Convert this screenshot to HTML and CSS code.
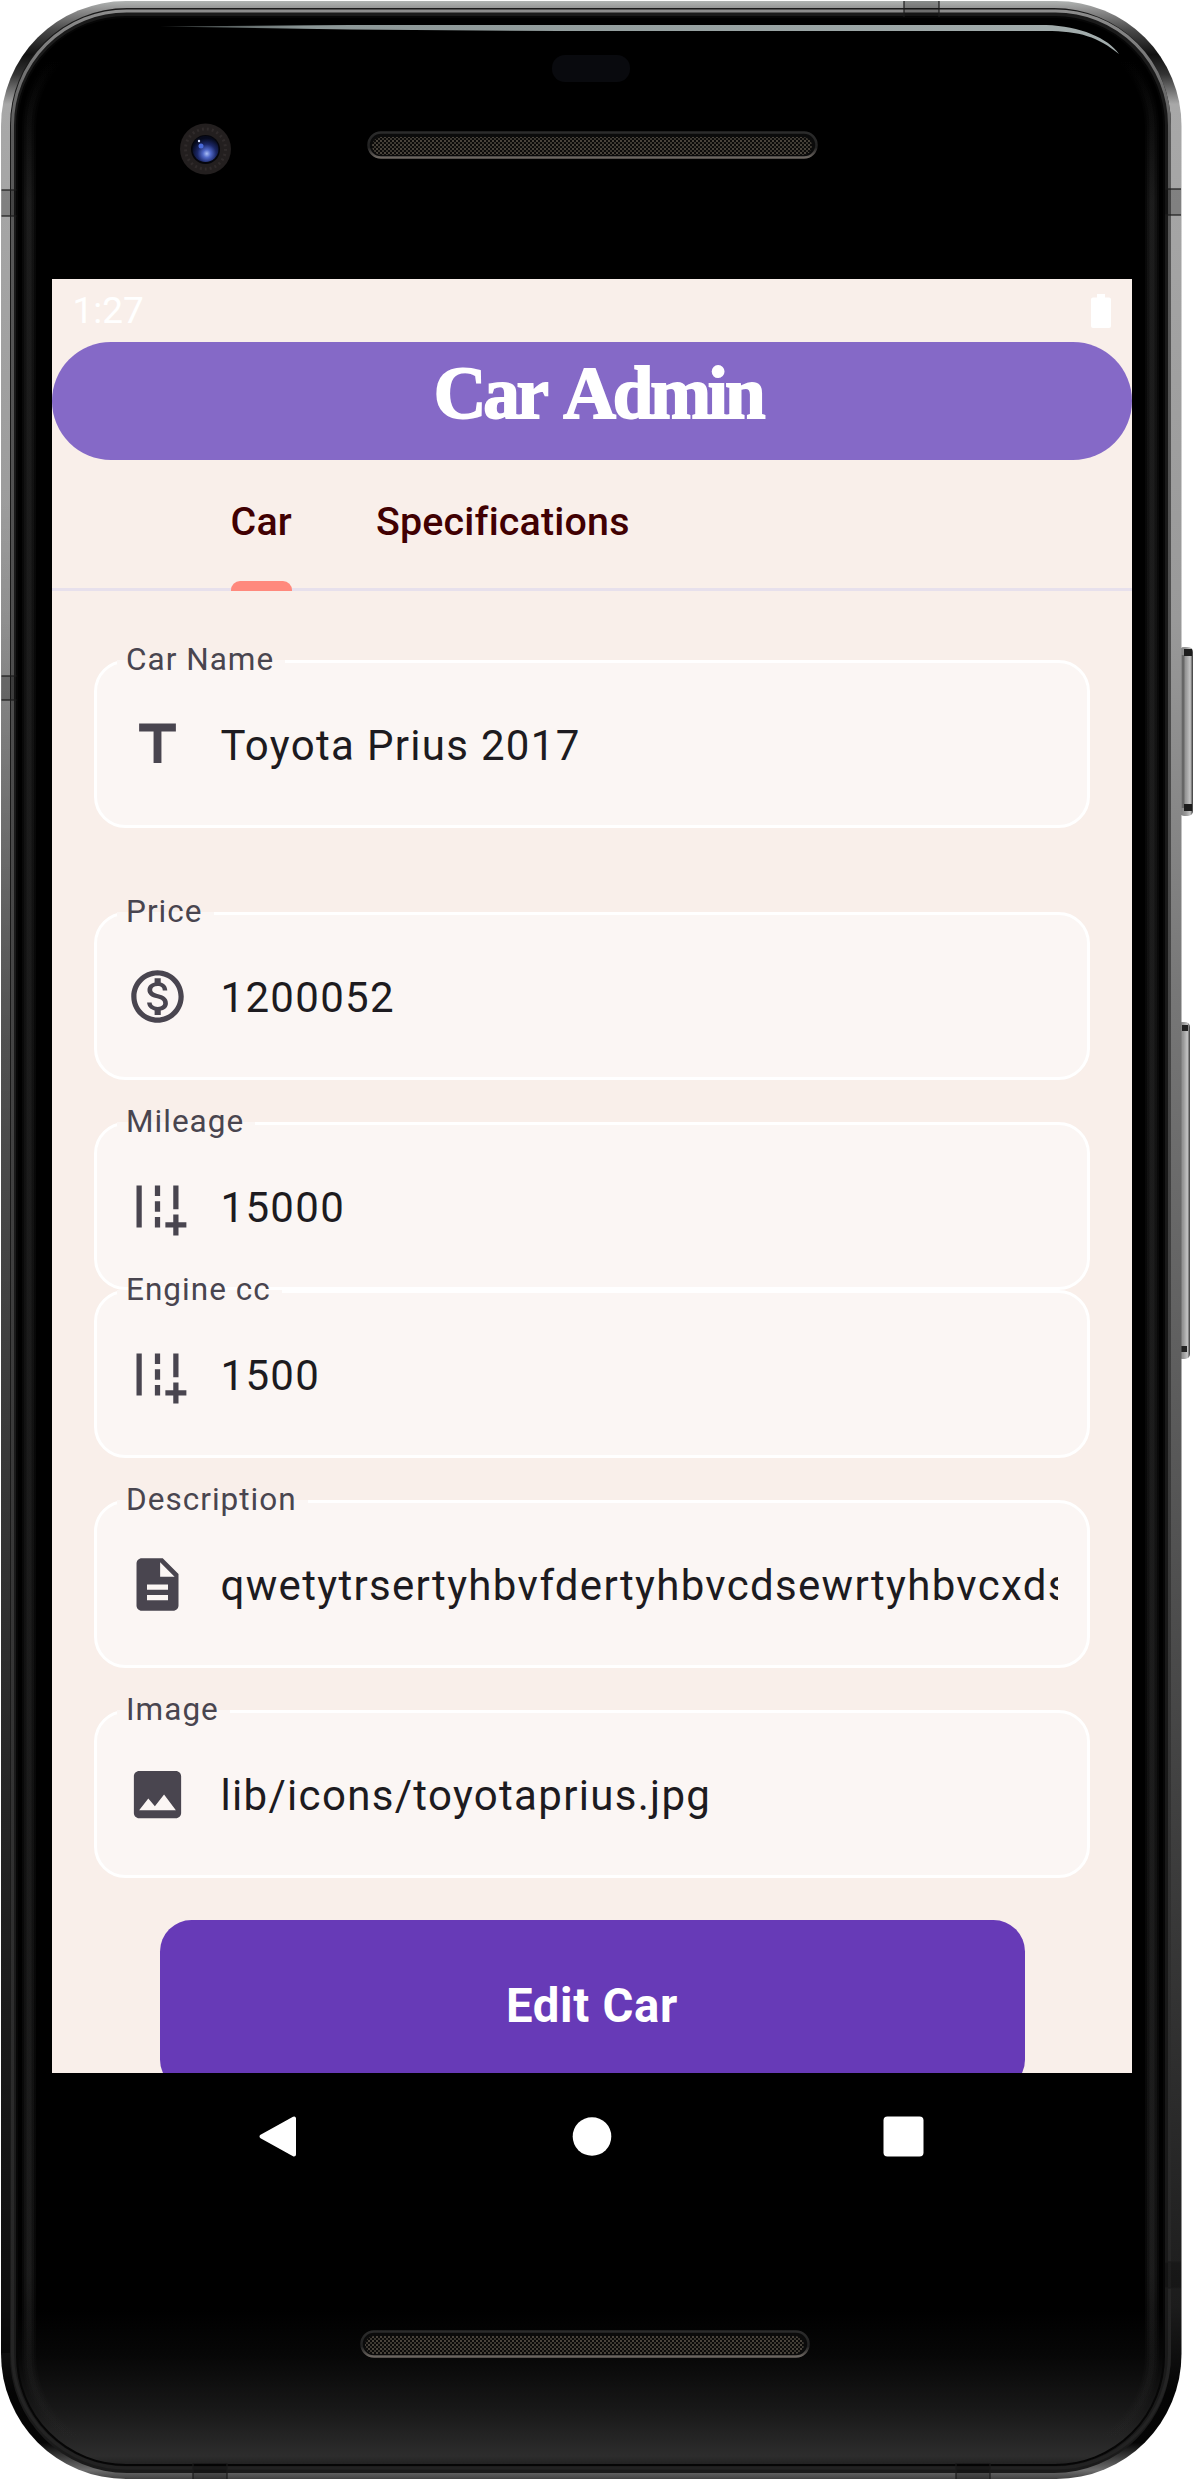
FILE: index.html
```html
<!DOCTYPE html>
<html lang="en">
<head>
<meta charset="utf-8">
<title>Car Admin</title>
<link rel="stylesheet" href="styles.css">
</head>
<body>
<div class="phone">
  <svg class="chassis" viewBox="0 0 1194 2480" aria-hidden="true">
    <defs>
      <linearGradient id="metal" gradientUnits="userSpaceOnUse" x1="0" y1="0" x2="0" y2="2480">
        <stop offset="0" stop-color="#b4b8b6"/><stop offset=".004" stop-color="#8f8f8f"/>
        <stop offset=".012" stop-color="#4a4a4a"/><stop offset=".022" stop-color="#101010"/><stop offset=".03" stop-color="#333"/>
        <stop offset=".042" stop-color="#a8a8a8"/><stop offset=".25" stop-color="#999"/>
        <stop offset=".4" stop-color="#777"/><stop offset=".6" stop-color="#565656"/>
        <stop offset=".8" stop-color="#343434"/><stop offset=".93" stop-color="#1c1c1c"/>
        <stop offset=".965" stop-color="#040404"/><stop offset=".985" stop-color="#050505"/>
        <stop offset=".996" stop-color="#6e6e6e"/><stop offset="1" stop-color="#3c3c3c"/>
      </linearGradient>
      <linearGradient id="shade" gradientUnits="userSpaceOnUse" x1="0" y1="500" x2="0" y2="2300">
        <stop offset="0" stop-color="#000" stop-opacity="0"/><stop offset=".3" stop-color="#000" stop-opacity=".3"/>
        <stop offset="1" stop-color="#000" stop-opacity=".5"/>
      </linearGradient>
      <linearGradient id="rim" x1="0" y1="0" x2="0" y2="1">
        <stop offset="0" stop-color="#8c8c8c"/><stop offset=".05" stop-color="#5a5a5a"/>
        <stop offset="1" stop-color="#222"/>
      </linearGradient>
      <linearGradient id="glow" gradientUnits="userSpaceOnUse" x1="0" y1="2310" x2="0" y2="2464">
        <stop offset="0" stop-color="#000"/><stop offset=".3" stop-color="#070707"/><stop offset=".65" stop-color="#181818"/>
        <stop offset=".95" stop-color="#2d2d2d"/><stop offset="1" stop-color="#222"/>
      </linearGradient>
      <linearGradient id="edge" gradientUnits="userSpaceOnUse" x1="0" y1="60" x2="0" y2="2440">
        <stop offset="0" stop-color="#444" stop-opacity="0"/><stop offset=".06" stop-color="#444"/>
        <stop offset=".93" stop-color="#444"/><stop offset="1" stop-color="#444" stop-opacity="0"/>
      </linearGradient>
      <linearGradient id="shine"><stop offset="0" stop-color="#7d8a8a" stop-opacity=".4"/><stop offset=".15" stop-color="#8b9696"/><stop offset="1" stop-color="#a3adad"/></linearGradient>
      <linearGradient id="key"><stop offset="0" stop-color="#777"/><stop offset=".5" stop-color="#999"/><stop offset=".8" stop-color="#c4c4c4"/><stop offset="1" stop-color="#333"/></linearGradient>
      <radialGradient id="lens" cx=".55" cy=".68" r=".6"><stop offset="0" stop-color="#a9bdf5"/><stop offset=".25" stop-color="#5068c8"/><stop offset=".6" stop-color="#1b2766"/><stop offset="1" stop-color="#060a1c"/></radialGradient>
      <linearGradient id="lip" x1="0" y1="0" x2="0" y2="1"><stop offset="0" stop-color="#2b2b2b"/><stop offset=".6" stop-color="#222"/><stop offset="1" stop-color="#6b6560"/></linearGradient>
      <pattern id="mesh" width="4" height="4" patternUnits="userSpaceOnUse"><rect width="4" height="4" fill="#0c0b0a"/><rect width="2" height="2" fill="#4a443c"/><rect x="2" y="2" width="2" height="2" fill="#3c3831"/></pattern>
    </defs>
    <rect x="1179" y="647" width="14" height="169" rx="5" fill="url(#key)"/>
    <path d="M1183 655v153" stroke="#666" stroke-width="3"/>
    <path d="M1184 649h8v7h-8zM1184 804h8v7h-8z" fill="#1c1c1c"/>
    <rect x="1177" y="1022" width="13" height="337" rx="5" fill="url(#key)"/>
    <path d="M1182 1025h6v6h-6zM1181 1346h6v6h-6z" fill="#222"/>
    <rect x="1" y="1" width="1180.500" height="2478" rx="125" fill="url(#metal)"/>
    <rect x="1" y="500" width="11" height="1853" fill="url(#shade)"/>
    <rect x="10" y="8" width="1161" height="2465" rx="117" fill="#1a1a1a"/>
    <rect x="12.500" y="11" width="1157" height="2457" rx="114" fill="none" stroke="url(#rim)" stroke-width="3"/>
    <rect x="17" y="17" width="1147" height="2448" rx="109" fill="url(#glow)" stroke="#060606" stroke-width="2"/>
    <g fill="none" stroke="url(#edge)">
      <rect x="29" y="29" width="1123" height="2425" rx="98" stroke-width="14" stroke-opacity=".12"/>
      <rect x="29" y="29" width="1123" height="2425" rx="98" stroke-width="10" stroke-opacity=".16"/>
      <rect x="29" y="29" width="1123" height="2425" rx="98" stroke-width="5" stroke-opacity=".2"/>
    </g>
    <g fill="#000" fill-opacity=".22">
      <path d="M1.500 190h15v26h-15zM1.500 676h15v24h-15zM1165 189h16v26h-16zM904 1h35v16h-35zM193 2463h34v16h-34zM956 2463h34v16h-34zM1165 2262h16v26h-16z"/>
      <path fill="none" stroke="#1c1c1c" stroke-opacity=".8" stroke-width="1.500" d="M1.500 190h15M1.500 216h15M1.500 676h15M1.500 700h15M1165 189h16M1165 215h16M904 1v16M939 1v16M193 2463v16M227 2463v16M956 2463v16M990 2463v16M1165 2262h16M1165 2288h16"/>
    </g>
    <path d="M160 26.500 L350 25H1046C1080 26 1108 38 1119 54C1098 37 1080 31 1046 31H560L350 29.500Z" fill="url(#shine)"/>
    <rect x="552" y="55" width="78" height="27" rx="13" fill="#090a0e"/>
    <circle cx="205.500" cy="149" r="25.500" fill="#231f1f"/>
    <circle cx="205.500" cy="149" r="20" fill="none" stroke="#302b2b" stroke-width="3" stroke-dasharray="2 3"/>
    <circle cx="205.500" cy="149.500" r="14.500" fill="#05060c"/>
    <circle cx="205.500" cy="149" r="13" fill="url(#lens)"/>
    <circle cx="201" cy="146" r="2.500" fill="#4a6ad8"/><circle cx="199" cy="141" r="1.200" fill="#dfe6ff"/>
    <rect x="368.500" y="132.500" width="448" height="25" rx="12.500" fill="#0b0b0b" stroke="url(#lip)" stroke-width="2.500"/>
    <rect x="372" y="137" width="440" height="18" rx="9" fill="url(#mesh)"/>
    <rect x="361.500" y="2331.500" width="447" height="25" rx="12.500" fill="#0b0b0b" stroke="url(#lip)" stroke-width="2.500"/>
    <rect x="365" y="2336" width="439" height="18" rx="9" fill="url(#mesh)"/>
  </svg>

  <main class="screen">
    <div class="status">
      <span>1:27</span>
      <svg width="20" height="34" viewBox="0 0 20 34"><path fill="#fff" d="M6 0h8v3.500h4a2 2 0 0 1 2 2V32a2 2 0 0 1-2 2H2a2 2 0 0 1-2-2V5.500a2 2 0 0 1 2-2h4z"/></svg>
    </div>
    <header class="banner"><h1>Car Admin</h1></header>
    <nav class="tabs">
      <a class="tab active">Car</a>
      <a class="tab">Specifications</a>
    </nav>
    <form class="form">
      <div class="field wide-gap">
        <label>Car Name</label>
        <svg class="icon" viewBox="0 0 24 24"><path d="M5 4v3h5.500v12h3V7H19V4z"/></svg>
        <span class="value">Toyota Prius 2017</span>
      </div>
      <div class="field">
        <label>Price</label>
        <svg class="icon" viewBox="0 0 24 24"><path d="M12 2C6.480 2 2 6.480 2 12s4.480 10 10 10 10-4.480 10-10S17.520 2 12 2zm0 18c-4.410 0-8-3.590-8-8s3.590-8 8-8 8 3.590 8 8-3.590 8-8 8zm.310-8.860c-1.770-.450-2.340-.940-2.340-1.670 0-.840.790-1.430 2.100-1.430 1.380 0 1.900.660 1.940 1.640h1.710c-.050-1.340-.870-2.570-2.490-2.970V5H10.900v1.690c-1.510.320-2.720 1.300-2.720 2.810 0 1.790 1.490 2.690 3.660 3.210 1.950.460 2.340 1.150 2.340 1.870 0 .530-.390 1.390-2.100 1.390-1.600 0-2.230-.720-2.320-1.640H8.040c.1 1.700 1.360 2.660 2.860 2.970V19h2.340v-1.670c1.520-.290 2.720-1.160 2.730-2.770-.010-2.200-1.900-2.960-3.660-3.420z"/></svg>
        <span class="value">1200052</span>
      </div>
      <div class="field flush">
        <label>Mileage</label>
        <svg class="icon" viewBox="0 0 24 24"><path d="M20 18v-3h-2v3h-3v2h3v3h2v-3h3v-2zM20 4h-2v9h2zM6 4H4v16h2zM11 4h2v4h-2zM11 10h2v4h-2zM11 16h2v4h-2z"/></svg>
        <span class="value">15000</span>
      </div>
      <div class="field">
        <label>Engine cc</label>
        <svg class="icon" viewBox="0 0 24 24"><path d="M20 18v-3h-2v3h-3v2h3v3h2v-3h3v-2zM20 4h-2v9h2zM6 4H4v16h2zM11 4h2v4h-2zM11 10h2v4h-2zM11 16h2v4h-2z"/></svg>
        <span class="value">1500</span>
      </div>
      <div class="field">
        <label>Description</label>
        <svg class="icon" viewBox="0 0 24 24"><path d="M14 2H6c-1.100 0-1.990.9-1.990 2L4 20c0 1.100.890 2 1.990 2H18c1.100 0 2-.9 2-2V8l-6-6zm2 16H8v-2h8v2zm0-4H8v-2h8v2zm-3-5V3.500L18.500 9H13z"/></svg>
        <span class="value">qwetytrsertyhbvfdertyhbvcdsewrtyhbvcxds</span>
      </div>
      <div class="field">
        <label>Image</label>
        <svg class="icon" viewBox="0 0 24 24"><path d="M21 19V5c0-1.100-.9-2-2-2H5c-1.100 0-2 .9-2 2v14c0 1.100.9 2 2 2h14c1.100 0 2-.9 2-2zM8.500 13.500l2.500 3.010L14.500 12l4.500 6H5l3.500-4.500z"/></svg>
        <span class="value">lib/icons/toyotaprius.jpg</span>
      </div>
      <button class="submit" type="button">Edit Car</button>
    </form>
  </main>

  <nav class="navbar">
    <span><svg width="63" height="63" viewBox="0 0 63 63"><path d="M13.500 31.500 46 13.500V49.500Z" fill="#fff" stroke="#fff" stroke-width="4" stroke-linejoin="round"/></svg></span>
    <span><svg width="63" height="63" viewBox="0 0 63 63"><circle cx="31" cy="31.500" r="19.300" fill="#fff"/></svg></span>
    <span><svg width="63" height="63" viewBox="0 0 63 63"><rect x="9.500" y="11.500" width="40" height="40" rx="4" fill="#fff"/></svg></span>
  </nav>
</div>
</body>
</html>
```

FILE: styles.css
```css
* { box-sizing: border-box; }

body {
  margin: 0;
  background: #fff;
  font-family: Roboto, "Liberation Sans", sans-serif;
}

.phone {
  position: relative;
  width: 1194px;
  height: 2480px;
  padding: 279px 62px 0 52px;
}

.chassis {
  position: absolute;
  inset: 0;
  width: 1194px;
  height: 2480px;
}

.screen {
  position: relative;
  display: flex;
  flex-direction: column;
  height: 1794px;
  overflow: hidden;
  background: #f9efea;
}

.status {
  flex: none;
  display: flex;
  justify-content: space-between;
  align-items: center;
  height: 63px;
  padding: 0 21px 0 20.500px;
  color: #fff;
  font-size: 37px;
  line-height: 65px;
}

.banner {
  flex: none;
  height: 118px;
  border-radius: 59px;
  background: #8569c7;
  text-align: center;
}

.banner h1 {
  margin: 0;
  padding-left: 12px;
  color: #fff;
  font: bold 73px/104px "Liberation Serif", serif;
  letter-spacing: -3.2px;
  word-spacing: 8px;
  -webkit-text-stroke: 1.8px #fff;
}

.tabs {
  flex: none;
  display: flex;
  gap: 84px;
  height: 131px;
  padding-left: 178.500px;
  background: linear-gradient(#e7e0ec, #e7e0ec) bottom / 100% 3px no-repeat;
}

.tab {
  display: flex;
  flex-direction: column;
  color: #410002;
  font-size: 39.375px;
  font-weight: 500;
  line-height: 123px;
  letter-spacing: .2px;
}

.tab.active::after {
  content: "";
  height: 10px;
  margin-top: -2px;
  border-radius: 9px 9px 0 0;
  background: #ff897d;
}

.form {
  display: flex;
  flex-direction: column;
  padding: 69px 42px 0;
}

.field {
  flex: none;
  position: relative;
  display: flex;
  align-items: center;
  gap: 32px;
  height: 168px;
  margin-bottom: 42px;
  padding: 0 29px 0 28.500px;
  border: 3px solid #fff;
  border-radius: 31.500px;
  background: #fbf6f4;
}

.field.wide-gap { margin-bottom: 84px; }
.field.flush { margin-bottom: 0; }

.field label {
  position: absolute;
  left: 20px;
  top: -23px;
  padding: 0 11px 0 9px;
  color: #49454f;
  font-size: 31.500px;
  line-height: 40px;
  letter-spacing: 1.020px;
  background: linear-gradient(#fbf6f4, #fbf6f4) 0 20px / 100% 4px no-repeat;
}

.icon {
  flex: none;
  width: 63px;
  height: 63px;
  fill: #49454f;
}

.value {
  flex: 1;
  min-width: 0;
  padding-top: 2px;
  overflow: hidden;
  white-space: nowrap;
  color: #1d1b20;
  font-size: 42px;
  line-height: 63px;
  letter-spacing: 1.312px;
}

.submit {
  flex: none;
  align-self: center;
  width: 865px;
  height: 171px;
  border: 0;
  border-radius: 31.500px;
  background: #673ab7;
  color: #fff;
  font: 700 47.250px Roboto, sans-serif;
  letter-spacing: .7px;
}

.navbar {
  position: relative;
  display: flex;
  justify-content: center;
  align-items: center;
  height: 126px;
}

.navbar span {
  display: flex;
  justify-content: center;
  width: 313px;
}
```
